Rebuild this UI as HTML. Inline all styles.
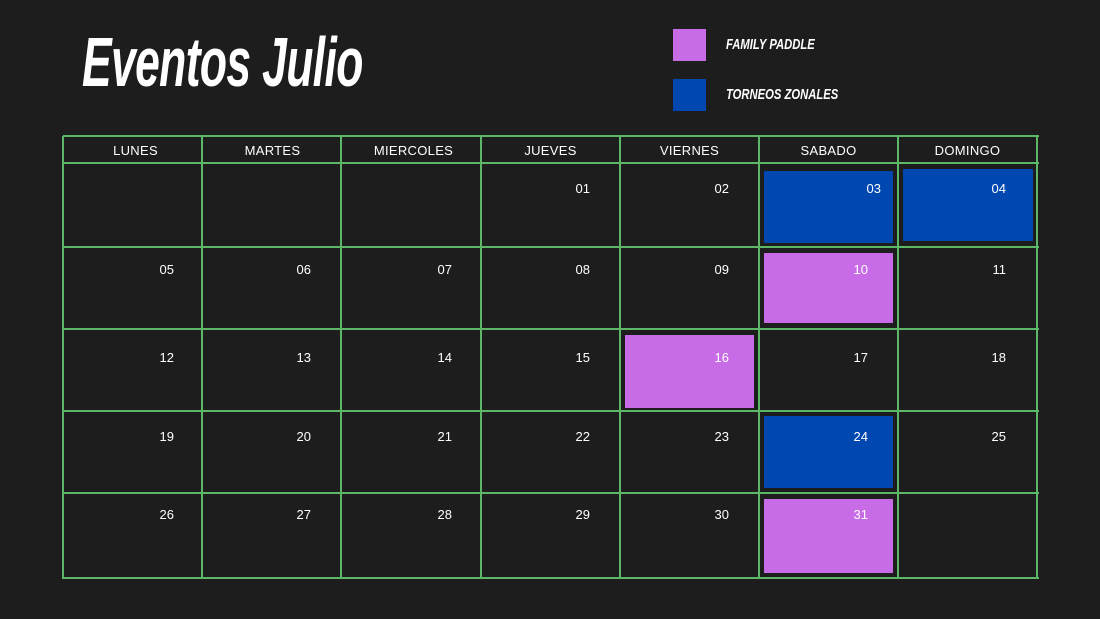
<!DOCTYPE html><html><head><style>
body{margin:0;width:1100px;height:619px;background:#1d1d1d;position:relative;overflow:hidden;font-family:"Liberation Sans",sans-serif;color:#fff}
.a{position:absolute}
.t{left:82px;top:22px;font-size:70px;font-weight:bold;font-style:italic;transform:scaleX(.635);transform-origin:left top;letter-spacing:-1px;white-space:nowrap}
.lg{font-size:15px;font-weight:bold;font-style:italic;transform:scaleX(.75);transform-origin:left top;white-space:nowrap}
.h{font-size:13px;text-align:center;width:139px;top:143px;letter-spacing:.3px}
.n{font-size:13px;text-align:right;width:40px}
.p{background:#c86be6}.b{background:#0047b0}
.v{width:2px;background:#5cb868;top:136px;height:443px}
.r{height:2px;background:#5cb868;left:63px;width:976px}
</style></head><body>
<div class="a t">Eventos Julio</div>
<div class="a p" style="left:673px;top:29px;width:33px;height:32px"></div>
<div class="a b" style="left:673px;top:79px;width:33px;height:32px"></div>
<div class="a lg" style="left:726px;top:36px">FAMILY PADDLE</div>
<div class="a lg" style="left:726px;top:86px">TORNEOS ZONALES</div>

<div class="a b" style="left:764px;top:171px;width:129px;height:72px"></div>
<div class="a b" style="left:903px;top:169px;width:130px;height:72px"></div>
<div class="a p" style="left:764px;top:253px;width:129px;height:70px"></div>
<div class="a p" style="left:625px;top:335px;width:129px;height:73px"></div>
<div class="a b" style="left:764px;top:416px;width:129px;height:72px"></div>
<div class="a p" style="left:764px;top:499px;width:129px;height:74px"></div>

<div class="a v" style="left:62px"></div><div class="a v" style="left:201px"></div><div class="a v" style="left:340px"></div><div class="a v" style="left:480px"></div><div class="a v" style="left:619px"></div><div class="a v" style="left:758px"></div><div class="a v" style="left:897px"></div><div class="a v" style="left:1036px"></div>
<div class="a r" style="top:135px"></div><div class="a r" style="top:162px"></div><div class="a r" style="top:246px"></div><div class="a r" style="top:328px"></div><div class="a r" style="top:410px"></div><div class="a r" style="top:492px"></div><div class="a r" style="top:577px"></div>

<div class="a h" style="left:66px">LUNES</div><div class="a h" style="left:203px">MARTES</div><div class="a h" style="left:344px">MIERCOLES</div><div class="a h" style="left:481px">JUEVES</div><div class="a h" style="left:620px">VIERNES</div><div class="a h" style="left:759px">SABADO</div><div class="a h" style="left:898px">DOMINGO</div>

<div class="a n" style="left:550px;top:181px">01</div><div class="a n" style="left:689px;top:181px">02</div><div class="a n" style="left:841px;top:181px">03</div><div class="a n" style="left:966px;top:181px">04</div>
<div class="a n" style="left:134px;top:262px">05</div><div class="a n" style="left:271px;top:262px">06</div><div class="a n" style="left:412px;top:262px">07</div><div class="a n" style="left:550px;top:262px">08</div><div class="a n" style="left:689px;top:262px">09</div><div class="a n" style="left:828px;top:262px">10</div><div class="a n" style="left:966px;top:262px">11</div>
<div class="a n" style="left:134px;top:350px">12</div><div class="a n" style="left:271px;top:350px">13</div><div class="a n" style="left:412px;top:350px">14</div><div class="a n" style="left:550px;top:350px">15</div><div class="a n" style="left:689px;top:350px">16</div><div class="a n" style="left:828px;top:350px">17</div><div class="a n" style="left:966px;top:350px">18</div>
<div class="a n" style="left:134px;top:429px">19</div><div class="a n" style="left:271px;top:429px">20</div><div class="a n" style="left:412px;top:429px">21</div><div class="a n" style="left:550px;top:429px">22</div><div class="a n" style="left:689px;top:429px">23</div><div class="a n" style="left:828px;top:429px">24</div><div class="a n" style="left:966px;top:429px">25</div>
<div class="a n" style="left:134px;top:507px">26</div><div class="a n" style="left:271px;top:507px">27</div><div class="a n" style="left:412px;top:507px">28</div><div class="a n" style="left:550px;top:507px">29</div><div class="a n" style="left:689px;top:507px">30</div><div class="a n" style="left:828px;top:507px">31</div>
</body></html>
